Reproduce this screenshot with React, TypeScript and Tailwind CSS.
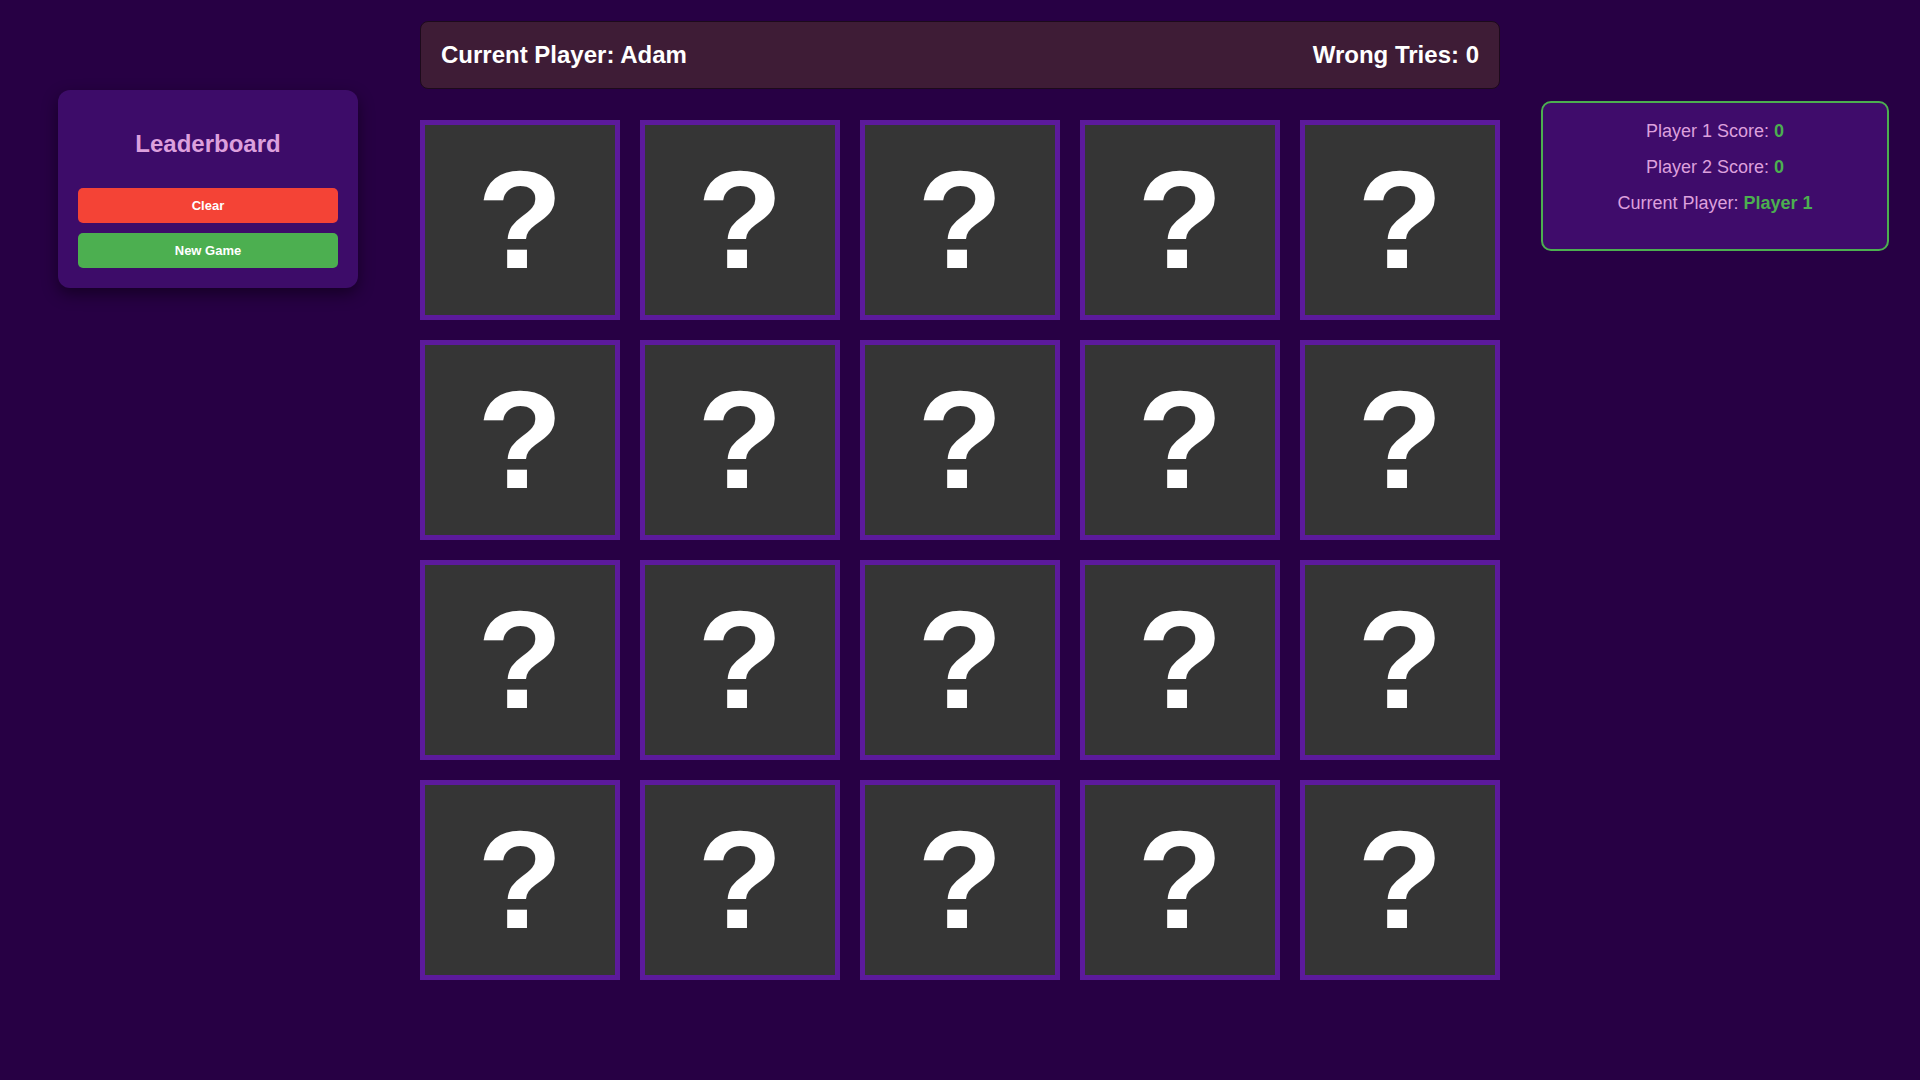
import React from 'react';

const cards = Array.from({ length: 20 }, (_, i) => i);

const App = () => {
  return (
    <div className="min-h-screen w-full bg-[#270044] font-['Liberation_Sans',Arial,sans-serif]">
      <div className="flex items-start">
        {/* Leaderboard */}
        <div className="ml-[58px] mt-[90px] w-[300px] rounded-xl bg-[#3d0c69] px-5 pb-5 pt-5 shadow-[0_6px_16px_rgba(0,0,0,0.45)]">
          <h2 className="mt-5 mb-[30px] text-center text-[24px] font-bold leading-[28px] text-[#dda0dd]">
            Leaderboard
          </h2>
          <div className="flex flex-col gap-[10px]">
            <button className="h-[35px] w-full rounded-[5px] bg-[#f44336] text-[13px] font-bold text-white">
              Clear
            </button>
            <button className="h-[35px] w-full rounded-[5px] bg-[#4caf50] text-[13px] font-bold text-white">
              New Game
            </button>
          </div>
        </div>

        {/* Board */}
        <div className="ml-[62px] mt-[21px] w-[1080px]">
          <div className="flex h-[68px] items-center justify-between rounded-lg border border-[#1d0a1c] bg-[#3e1c36] px-5 text-[24px] font-bold text-white">
            <span>Current Player: Adam</span>
            <span>Wrong Tries: 0</span>
          </div>
          <div className="mt-[31px] grid grid-cols-5 gap-5">
            {cards.map((c) => (
              <div
                key={c}
                className="flex h-[200px] w-[200px] items-center justify-center border-[5px] border-[#5c1a9c] bg-[#353535]"
              >
                <span className="text-[140px] font-bold leading-none text-white">?</span>
              </div>
            ))}
          </div>
        </div>

        {/* Scores */}
        <div className="ml-[41px] mt-[101px] flex h-[150px] w-[348px] flex-col items-center rounded-[10px] border-2 border-[#4caf50] bg-[#3f0c6b] pt-[10px] text-[18px] text-[#dda0dd]">
          <p className="leading-[36px]">
            Player 1 Score: <span className="font-bold text-[#4caf50]">0</span>
          </p>
          <p className="leading-[36px]">
            Player 2 Score: <span className="font-bold text-[#4caf50]">0</span>
          </p>
          <p className="leading-[36px]">
            Current Player: <span className="font-bold text-[#4caf50]">Player 1</span>
          </p>
        </div>
      </div>
    </div>
  );
};

export default App;
